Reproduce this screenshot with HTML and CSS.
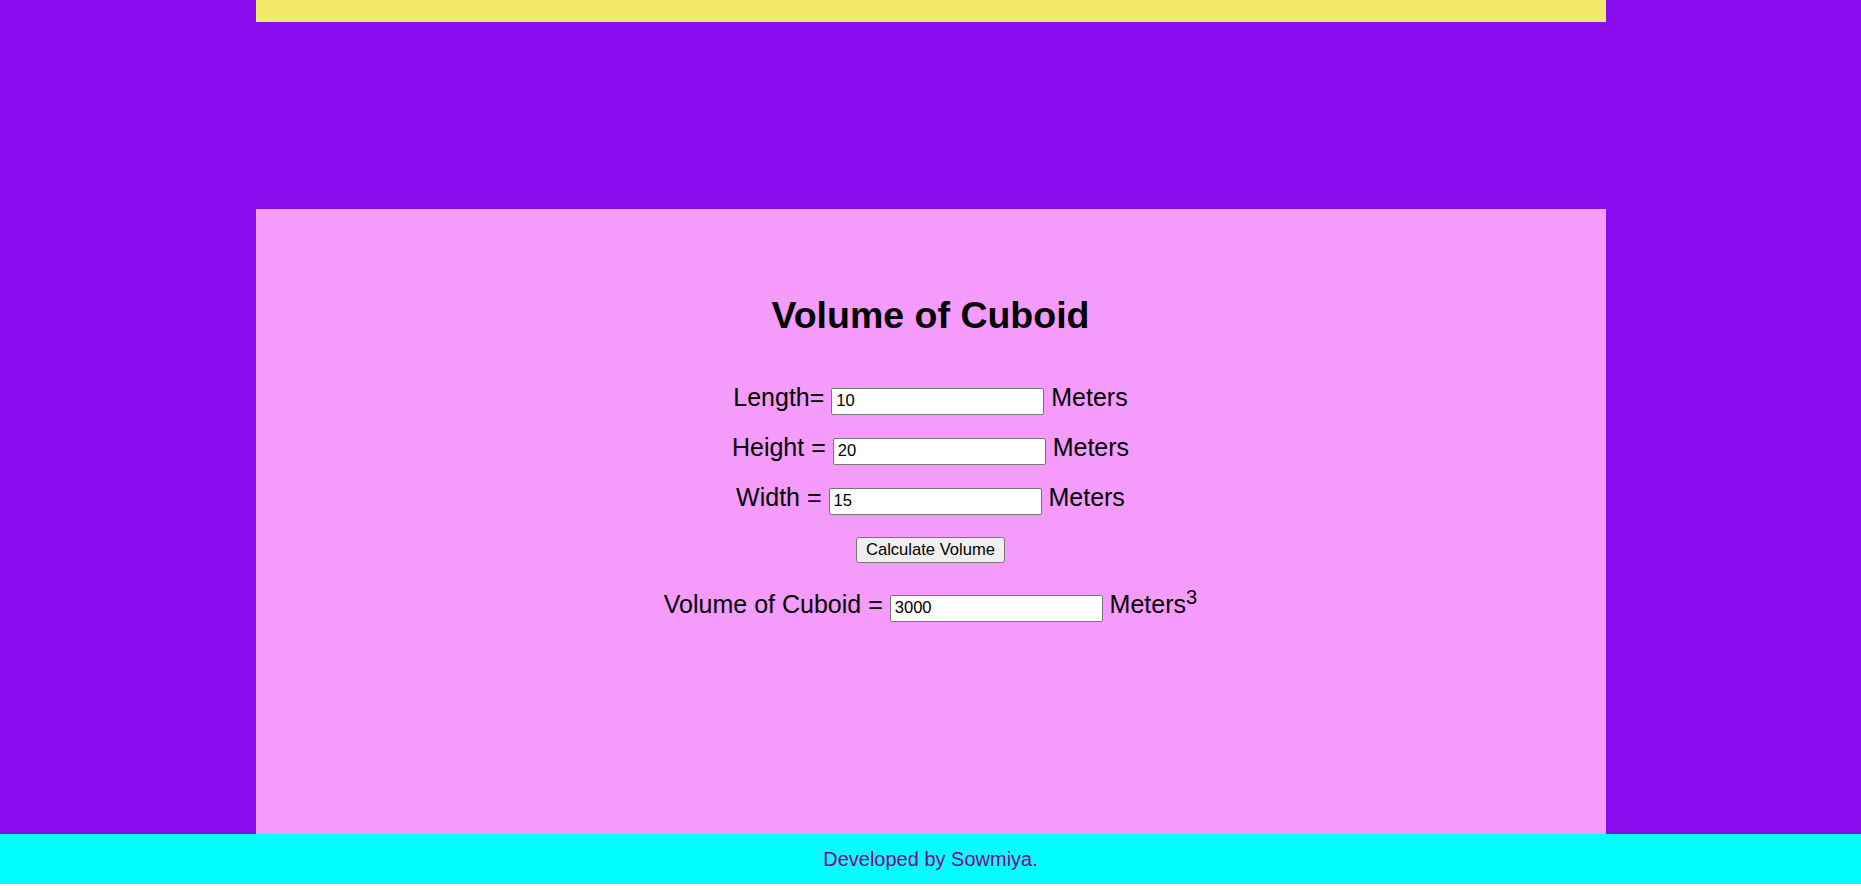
FILE: index.html
```html
<!DOCTYPE html>
<html lang="en">
<head>
<meta charset="utf-8">
<title>Volume of Cuboid</title>
<link rel="stylesheet" href="styles.css">
</head>
<body>
<div class="topbar"></div>
<main class="panel">
  <h1 class="title">Volume of Cuboid</h1>
  <div class="row">Length= <input class="field" type="text" value="10"> Meters</div>
  <div class="row">Height = <input class="field" type="text" value="20"> Meters</div>
  <div class="row">Width = <input class="field" type="text" value="15"> Meters</div>
  <div class="btnrow"><button class="btn" type="button">Calculate Volume</button></div>
  <div class="row result">Volume of Cuboid = <input class="field" type="text" value="3000"> Meters<sup class="sup">3</sup></div>
</main>
<footer class="footer">Developed by Sowmiya.</footer>
</body>
</html>
```
FILE: styles.css
```css
html {
  background: #ffffff;
}
body {
  margin: 0;
  background: #890cee;
  font-family: "Liberation Sans", Arial, sans-serif;
  color: #000;
}
.topbar {
  width: 1350px;
  height: 22px;
  margin: 0 auto;
  background: #f2e96b;
}
.panel {
  box-sizing: border-box;
  width: 1350px;
  height: 625px;
  margin: 187px auto 0;
  padding-top: 85px;
  background: #f49bfc;
  text-align: center;
}
.title {
  margin: 0 0 35px;
  font-size: 37.5px;
  font-weight: bold;
  line-height: 43px;
}
.row {
  font-size: 25px;
  line-height: 50px;
  height: 50px;
}
.field {
  box-sizing: border-box;
  width: 213px;
  height: 27px;
  padding: 1px 4px;
  border: 1px solid #767676;
  border-radius: 2px;
  background: #fff;
  font-family: "Liberation Sans", Arial, sans-serif;
  font-size: 16.6px;
  color: #000;
}
.btnrow {
  padding: 15px 0 10px;
  line-height: 0;
}
.btn {
  box-sizing: border-box;
  height: 26px;
  padding: 0 9px;
  border: 1px solid #767676;
  border-radius: 3px;
  background: #efefef;
  font-family: "Liberation Sans", Arial, sans-serif;
  font-size: 16.6px;
  line-height: 24px;
  color: #000;
}
.result {
  margin-top: 6px;
}
.sup {
  font-size: 20px;
  line-height: 0;
}
.footer {
  height: 50px;
  background: #00ffff;
  color: #8b008b;
  font-size: 20px;
  line-height: 50px;
  text-align: center;
}
```
